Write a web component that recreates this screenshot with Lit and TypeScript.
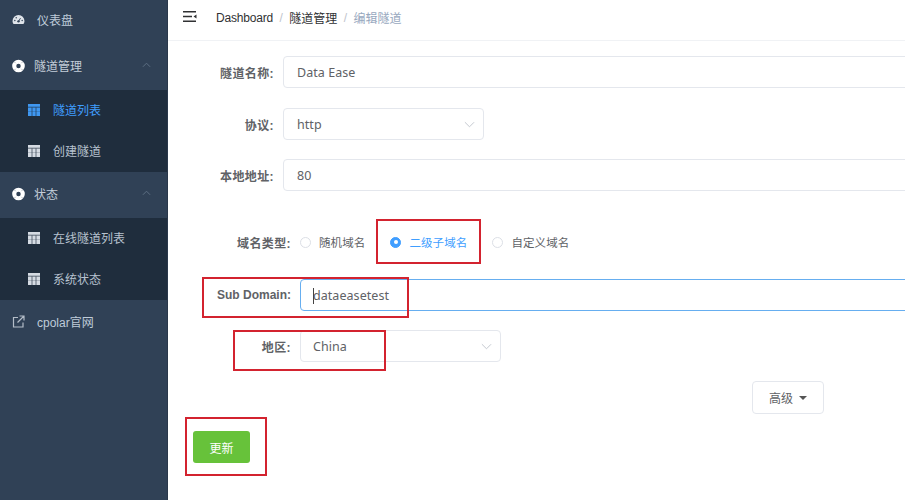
import { LitElement, html, css } from "lit";
import { customElement } from "lit/decorators.js";

const tableIcon = html`<svg class="ti" viewBox="0 0 12 12" width="12" height="12"><path fill="currentColor" d="M0 0h12v12H0z"/><path stroke="#1f2d3d" stroke-width=".8" d="M0 3.200h12M4 3.200V12M8 3.200V12" opacity=".8"/><path stroke="#1f2d3d" stroke-width=".6" d="M0 7.500h12" opacity=".35"/></svg>`;
const ringIcon = html`<svg class="ri" viewBox="0 0 14 14" width="14" height="14"><circle cx="7" cy="7" r="4.600" fill="none" stroke="#fff" stroke-width="4.400"/><path stroke="#304156" stroke-width=".6" d="M2 2l2 2M12 2l-2 2M2 12l2-2M12 12l-2-2" opacity=".6"/></svg>`;
const chevUp = html`<svg class="chev" viewBox="0 0 10 6" width="9" height="6"><path d="M1 5l4-4 4 4" fill="none" stroke="#5d6f84" stroke-width="1.100"/></svg>`;
const chevDown = html`<svg class="sel" viewBox="0 0 12 7" width="11" height="7"><path d="M1 1l5 5 5-5" fill="none" stroke="#c0c4cc" stroke-width="1"/></svg>`;
const gauge = html`<svg viewBox="0 0 14 12" width="13" height="11"><path fill="#dfe4ea" d="M7 1a6.500 6.500 0 0 0-6.500 6.500c0 1.500.5 2.700 1.200 3.500h10.600c.7-.8 1.200-2 1.200-3.500A6.500 6.500 0 0 0 7 1z"/><circle cx="7" cy="8" r="1.300" fill="#304156"/><path stroke="#304156" stroke-width="1" d="M7 8l2.200-3.500"/><circle cx="3" cy="7" r=".8" fill="#304156"/><circle cx="4.500" cy="4" r=".8" fill="#304156"/><circle cx="11" cy="7" r=".8" fill="#304156"/></svg>`;
const ext = html`<svg viewBox="0 0 13 13" width="13" height="13"><path fill="none" stroke="#b4bdc8" stroke-width="1.200" d="M6 2.500H1.500v9.500h9.500V7.500M5.500 7.500L11.500 1.500M7.500 1h4.500v4.500"/></svg>`;
const menuIcon = html`<svg viewBox="0 0 14 12" width="14" height="12"><path fill="#303133" d="M0 0h13v1.600H0zM0 4.700h9v1.600H0zM0 9.400h13V11H0zM13.500 3.500v4l-3-2z"/></svg>`;

@customElement("app-root")
export class AppRoot extends LitElement {
  static styles = css`
    :host { display: block; width: 905px; height: 500px; overflow: hidden; background: #fff;
      font-family: "Liberation Sans", "Noto Sans CJK SC", sans-serif; }
    .app { display: flex; height: 500px; }
    .side { width: 168px; box-sizing: border-box; flex: none; background: #304156; color: #bfcbd9; font-size: 12px; border-right: 1px solid #2a384b; }
    .menu { margin-top: -2px; }
    .row { height: 46px; display: flex; align-items: center; padding-left: 12px; position: relative; padding-bottom: 3px; box-sizing: border-box; }
    .row .ic { width: 13px; display: flex; justify-content: center; flex: none; }
    .row .t1 { margin-left: 12px; }
    .row .t2 { margin-left: 9px; color: #c4ced9; }
    .chev { position: absolute; left: 142px; top: 18px; }
    .sub { background: #1f2d3d; }
    .sub .item { height: 41px; display: flex; align-items: center; padding: 0 0 2px 28px; color: #b7c2cf; box-sizing: border-box; }
    .sub .item span { margin-left: 13px; }
    .sub .item.on { color: #409eff; }
    .ti { color: #d5dbe3; }
    .on .ti { color: #3f97f0; }
    .main { flex: 1; min-width: 0; position: relative; overflow: hidden; }
    .head { height: 41px; box-sizing: border-box; border-bottom: 1px solid #f0f2f5; display: flex; align-items: center; padding-left: 15px; font-size: 12px; color: #303133; padding-bottom: 6px; }
    .crumbs { margin-left: 19px; display: flex; align-items: center; padding-top: 1px; }
    .dash { letter-spacing: -.2px; }
    .slash { color: #c0c4cc; margin: 0 6.500px; }
    .cur { color: #97a8be; }
    .form { padding-top: 15px; font-size: 12.500px; color: #606266; }
    .f { display: flex; align-items: center; height: 32px; margin-bottom: 19px; }
    .f.first { margin-bottom: 20px; }
    .f.w1 .lbl { width: 106px; }
    .f.w2 .lbl { width: 123px; }
    .lbl { text-align: right; font-weight: 700; color: #606266; font-size: 12px; flex: none; letter-spacing: .4px; }
    .lbl.latin { letter-spacing: 0; }
    .f.w1 .box, .f.w2 .box { margin-left: 9px; }
    .f.w2 .box { padding-left: 12px; }
    .box { height: 32px; box-sizing: border-box; border: 1px solid #e4e7ed; border-radius: 4px; display: flex; align-items: center; padding-left: 13px; letter-spacing: .05px; position: relative; flex: none; color: #606266; font-family: "Noto Sans", sans-serif; }
    .long { width: 760px; }
    .short { width: 201px; }
    .sel { position: absolute; right: 8px; top: 12px; }
    .focus { border-color: #66aef0; }
    .cursor { position: absolute; left: 12px; top: 8px; width: 1px; height: 16px; background: #444; }
    .radio-row { margin-top: 35px; margin-bottom: 21px; }
    .radios { display: flex; align-items: center; margin-left: 9px; font-size: 11.500px; letter-spacing: .1px; }
    .radio { display: flex; align-items: center; }
    .dot { width: 11px; height: 11px; border: 1px solid #dcdfe6; border-radius: 50%; margin-right: 8px; box-sizing: border-box; }
    .radio.on { color: #409eff; margin: 0 25px 0 25px; }
    .radio.on .dot { background: #409eff; border-color: #409eff; display: flex; align-items: center; justify-content: center; }
    .radio.on .dot::after { content: ""; width: 4px; height: 4px; background: #fff; border-radius: 50%; }
    .adv-row { display: flex; padding-left: 584px; margin-bottom: 17px; margin-top: 2px; }
    .adv { width: 72px; height: 33px; box-sizing: border-box; border: 1px solid #e4e7ed; border-radius: 4px; display: flex; align-items: center; justify-content: center; font-size: 12px; color: #606266; gap: 6px; }
    .tri { width: 0; height: 0; border-left: 4px solid transparent; border-right: 4px solid transparent; border-top: 4px solid #555; }
    .sub-row { padding-left: 25px; }
    .save { width: 57px; height: 32px; border-radius: 3px; background: #67c23a; color: #fff; font-size: 12px; display: flex; align-items: center; justify-content: center; }
    .red { position: absolute; border: 2px solid #d3232f; box-sizing: border-box; pointer-events: none; }
    .r1 { left: 208px; top: 219px; width: 105px; height: 45px; }
    .r2 { left: 34px; top: 277px; width: 207px; height: 41px; }
    .r3 { left: 65px; top: 330px; width: 153px; height: 41px; }
    .r4 { left: 17px; top: 417px; width: 82px; height: 59px; }
  `;

  render() {
    return html`<div class="app">
      <aside class="side"><div class="menu">
        <div class="row"><span class="ic">${gauge}</span><span class="t1">仪表盘</span></div>
        <div class="row"><span class="ic">${ringIcon}</span><span class="t2">隧道管理</span>${chevUp}</div>
        <div class="sub">
          <div class="item on">${tableIcon}<span>隧道列表</span></div>
          <div class="item">${tableIcon}<span>创建隧道</span></div>
        </div>
        <div class="row"><span class="ic">${ringIcon}</span><span class="t2">状态</span>${chevUp}</div>
        <div class="sub">
          <div class="item">${tableIcon}<span>在线隧道列表</span></div>
          <div class="item">${tableIcon}<span>系统状态</span></div>
        </div>
        <div class="row"><span class="ic">${ext}</span><span class="t1">cpolar官网</span></div>
      </div></aside>
      <main class="main">
        <div class="head">${menuIcon}<div class="crumbs"><span class="dash">Dashboard</span><span class="slash">/</span><span>隧道管理</span><span class="slash">/</span><span class="cur">编辑隧道</span></div></div>
        <div class="form">
          <div class="f w1 first"><div class="lbl">隧道名称:</div><div class="box long">Data Ease</div></div>
          <div class="f w1"><div class="lbl">协议:</div><div class="box short">http${chevDown}</div></div>
          <div class="f w1"><div class="lbl">本地地址:</div><div class="box long">80</div></div>
          <div class="f w2 radio-row"><div class="lbl">域名类型:</div>
            <div class="radios">
              <div class="radio"><i class="dot"></i>随机域名</div>
              <div class="radio on"><i class="dot"></i>二级子域名</div>
              <div class="radio"><i class="dot"></i>自定义域名</div>
            </div></div>
          <div class="f w2"><div class="lbl latin">Sub Domain:</div><div class="box long focus"><i class="cursor"></i>dataeasetest</div></div>
          <div class="f w2"><div class="lbl">地区:</div><div class="box short">China${chevDown}</div></div>
          <div class="adv-row"><div class="adv">高级<i class="tri"></i></div></div>
          <div class="sub-row"><div class="save">更新</div></div>
        </div>
        <div class="red r1"></div><div class="red r2"></div><div class="red r3"></div><div class="red r4"></div>
      </main>
    </div>`;
  }
}
